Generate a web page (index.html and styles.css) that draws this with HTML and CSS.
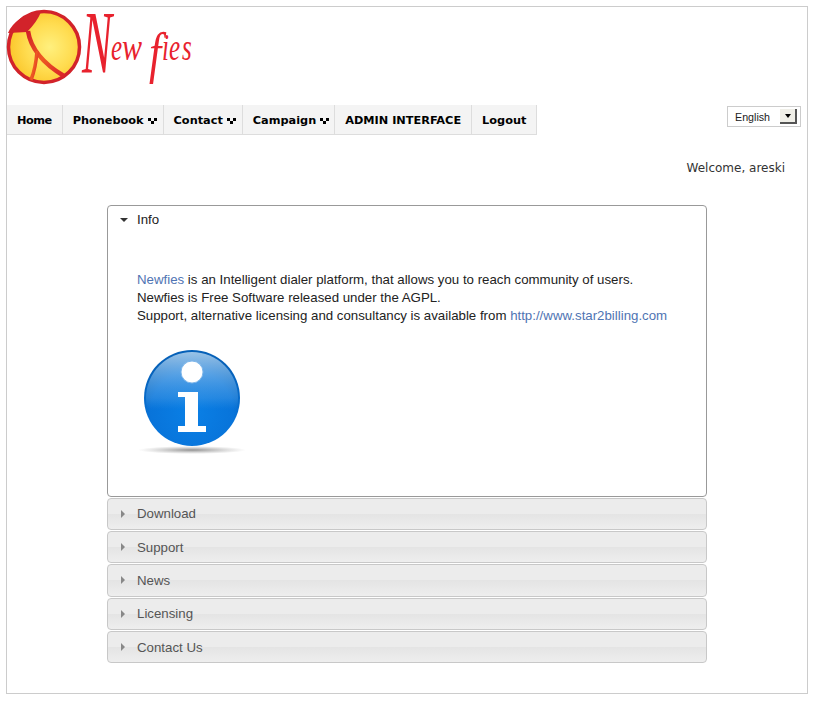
FILE: index.html
```html
<!DOCTYPE html>
<html lang="en">
<head>
<meta charset="utf-8">
<title>Newfies</title>
<link rel="stylesheet" href="styles.css">
</head>
<body>
<div class="page">
  <header class="logo">
    <svg width="190" height="98" viewBox="0 0 190 98" aria-label="Newfies logo">
      <defs>
        <radialGradient id="sun" cx="0.58" cy="0.5" r="0.55">
          <stop offset="0" stop-color="#fff07e"/>
          <stop offset="0.6" stop-color="#ffdc50"/>
          <stop offset="1" stop-color="#fbc92f"/>
        </radialGradient>
        <linearGradient id="arm" x1="0" y1="0" x2="1" y2="1">
          <stop offset="0" stop-color="#d22028"/>
          <stop offset="0.5" stop-color="#ee5a22"/>
          <stop offset="1" stop-color="#d9232a"/>
        </linearGradient>
      </defs>
      <circle cx="37" cy="40" r="35.500" fill="url(#sun)" stroke="#d2232a" stroke-width="3.500"/>
      <path d="M37 4 Q26 5 14 11 Q4 18 1 26 L20 25 Q30 15 34 5 Z" fill="#d2232a"/>
      <path d="M21 24 Q25 50 57 69" fill="none" stroke="url(#arm)" stroke-width="4.500"/>
      <path d="M30 44 Q29 60 24 73" fill="none" stroke="url(#arm)" stroke-width="3.500"/>
      <g class="word">
        <text transform="translate(75 65) scale(.98 1.950)" font-size="46">N</text>
        <text transform="translate(104 53) scale(1 1.500)" font-size="25">e</text>
        <text transform="translate(115 53) scale(1.200 1.500)" font-size="25">w</text>
        <text transform="translate(142 65) scale(1 1.300)" font-size="44">f</text>
        <text transform="translate(155 53) scale(1 1.500)" font-size="25">i</text>
        <text transform="translate(162 53) scale(1 1.500)" font-size="25">e</text>
        <text transform="translate(175 53) scale(1 1.500)" font-size="25">s</text>
      </g>
    </svg>
  </header>
  <div class="topbar">
    <nav class="menu">
      <a class="menu-item home" href="#">Home</a>
      <a class="menu-item has-sub" href="#">Phonebook <i class="caret"></i></a>
      <a class="menu-item has-sub" href="#">Contact <i class="caret"></i></a>
      <a class="menu-item has-sub narrow" href="#">Campaign <i class="caret"></i></a>
      <a class="menu-item" href="#">ADMIN INTERFACE</a>
      <a class="menu-item" href="#">Logout</a>
    </nav>
    <div class="lang"><span>English</span><b class="lang-btn"><i></i></b></div>
  </div>
  <p class="welcome">Welcome, areski</p>
  <main class="accordion">
    <section class="panel open">
      <h3 class="head"><i class="tri-down"></i>Info</h3>
      <div class="body">
        <p>
          <a href="#">Newfies</a> is an Intelligent dialer platform, that allows you to reach community of users.<br>
          Newfies is Free Software released under the AGPL.<br>
          Support, alternative licensing and consultancy is available from <a href="#">http://www.star2billing.com</a>
        </p>
        <svg class="info" width="110" height="108" viewBox="0 0 110 108" aria-label="Information">
          <defs>
            <radialGradient id="ball" cx="0.5" cy="0.65" r="0.6">
              <stop offset="0" stop-color="#0a80e6"/>
              <stop offset="0.72" stop-color="#0874da"/>
              <stop offset="1" stop-color="#0560b8"/>
            </radialGradient>
            <linearGradient id="gloss" x1="0" y1="0" x2="0" y2="1">
              <stop offset="0" stop-color="#b5d5f0" stop-opacity=".85"/>
              <stop offset="0.5" stop-color="#5aa6e8" stop-opacity=".35"/>
              <stop offset="0.62" stop-color="#4d9fe6" stop-opacity="0"/>
            </linearGradient>
            <radialGradient id="shade" cx="0.5" cy="0.5" r="0.5">
              <stop offset="0" stop-color="#777" stop-opacity=".8"/>
              <stop offset="1" stop-color="#999" stop-opacity="0"/>
            </radialGradient>
          </defs>
          <ellipse cx="55" cy="102" rx="54" ry="4" fill="url(#shade)"/>
          <circle cx="55" cy="50" r="48" fill="url(#ball)"/>
          <circle cx="55" cy="50" r="46" fill="url(#gloss)"/>
          <circle cx="55" cy="24" r="11" fill="#fff" stroke="#7db6ea" stroke-width="1"/>
          <path d="M41 44 H61 V78 H69 V84 H41 V78 H48 V49 H41 Z" fill="#fff"/>
        </svg>
      </div>
    </section>
    <section class="panel closed up"><h3 class="head"><i class="tri-right"></i>Download</h3></section>
    <section class="panel closed"><h3 class="head"><i class="tri-right"></i>Support</h3></section>
    <section class="panel closed tall"><h3 class="head"><i class="tri-right"></i>News</h3></section>
    <section class="panel closed up"><h3 class="head"><i class="tri-right"></i>Licensing</h3></section>
    <section class="panel closed"><h3 class="head"><i class="tri-right"></i>Contact Us</h3></section>
  </main>
</div>
</body>
</html>
```
FILE: styles.css
```css
* { box-sizing: border-box; }
html, body { margin: 0; background: #fff; }
body { padding: 6px 5px 0 6px; font-family: "Liberation Sans", Arial, sans-serif; font-size: 13.280px; color: #222; }
.page { width: 802px; height: 688px; border: 1px solid #ccc; }
.logo { height: 98px; }
.logo svg { display: block; overflow: visible; }
.word text { font-family: "Liberation Serif", serif; font-style: italic; fill: #e8222e; }
.topbar { display: flex; justify-content: space-between; align-items: flex-start; }
.menu { display: flex; height: 30px; background: #f4f4f4; border-bottom: 1px solid #ddd; }
.menu-item { display: flex; align-items: center; gap: 4px; padding: 1px 10px 0; height: 29px; border-right: 1px solid #ddd; font-family: "DejaVu Sans", sans-serif; font-weight: bold; font-size: 11.300px; color: #000; text-decoration: none; white-space: nowrap; }
.home { letter-spacing: -0.500px; }
.has-sub { padding-right: 6px; }
.narrow { padding-right: 5px; }
.caret { width: 9px; height: 6px; margin-top: 1px; background:
  linear-gradient(#000, #000) 0 0 / 3px 3px no-repeat,
  linear-gradient(#000, #000) 6px 0 / 3px 3px no-repeat,
  linear-gradient(#000, #000) 3px 3px / 3px 3px no-repeat; }
.lang { display: flex; justify-content: space-between; align-items: center; width: 74px; height: 21px; margin: 1px 6px 0 0; padding: 0 3px 0 7px; border: 1px solid #ccc; background: #fff; font-size: 10.700px; color: #222; }
.lang-btn { display: flex; align-items: center; justify-content: center; width: 17px; height: 15px; background: #f0efe8; border-right: 2px solid #555; border-bottom: 2px solid #555; }
.lang-btn i { border: 3px solid transparent; border-top: 4px solid #000; border-bottom: 0; }
.welcome { margin: 25px 22px 0 0; text-align: right; font-family: "DejaVu Sans", sans-serif; font-size: 12px; line-height: 16px; color: #333; }
.accordion { width: 600px; margin: 29px 0 0 100px; }
.panel { border: 1px solid #c8c8c8; border-radius: 4px; height: 32px; margin-top: 1px; }
.head { display: flex; align-items: center; margin: 0; padding-left: 29px; font-size: 13.280px; font-weight: normal; position: relative; }
.open { height: 292px; margin-top: 0; border-color: #999; }
.open .head { height: 27px; color: #222; }
.closed { background: linear-gradient(#ececec 0 50%, #e4e4e4 50%, #eeeeee); }
.closed .head { height: 30px; color: #555; }
.closed.up .head { height: 28px; }
.tall { height: 33px; }
.tri-down { position: absolute; left: 12px; top: 12px; border: 4px solid transparent; border-top: 4px solid #333; border-bottom: 0; }
.tri-right { position: absolute; left: 13px; top: 11px; border: 4px solid transparent; border-left: 4px solid #888; border-right: 0; }
.body { padding: 38px 29px 0; }
.body p { margin: 0; line-height: 18px; color: #222; }
.body a { color: #4f74b3; text-decoration: none; }
.info { display: block; margin: 23px 0 0 0; }
```
